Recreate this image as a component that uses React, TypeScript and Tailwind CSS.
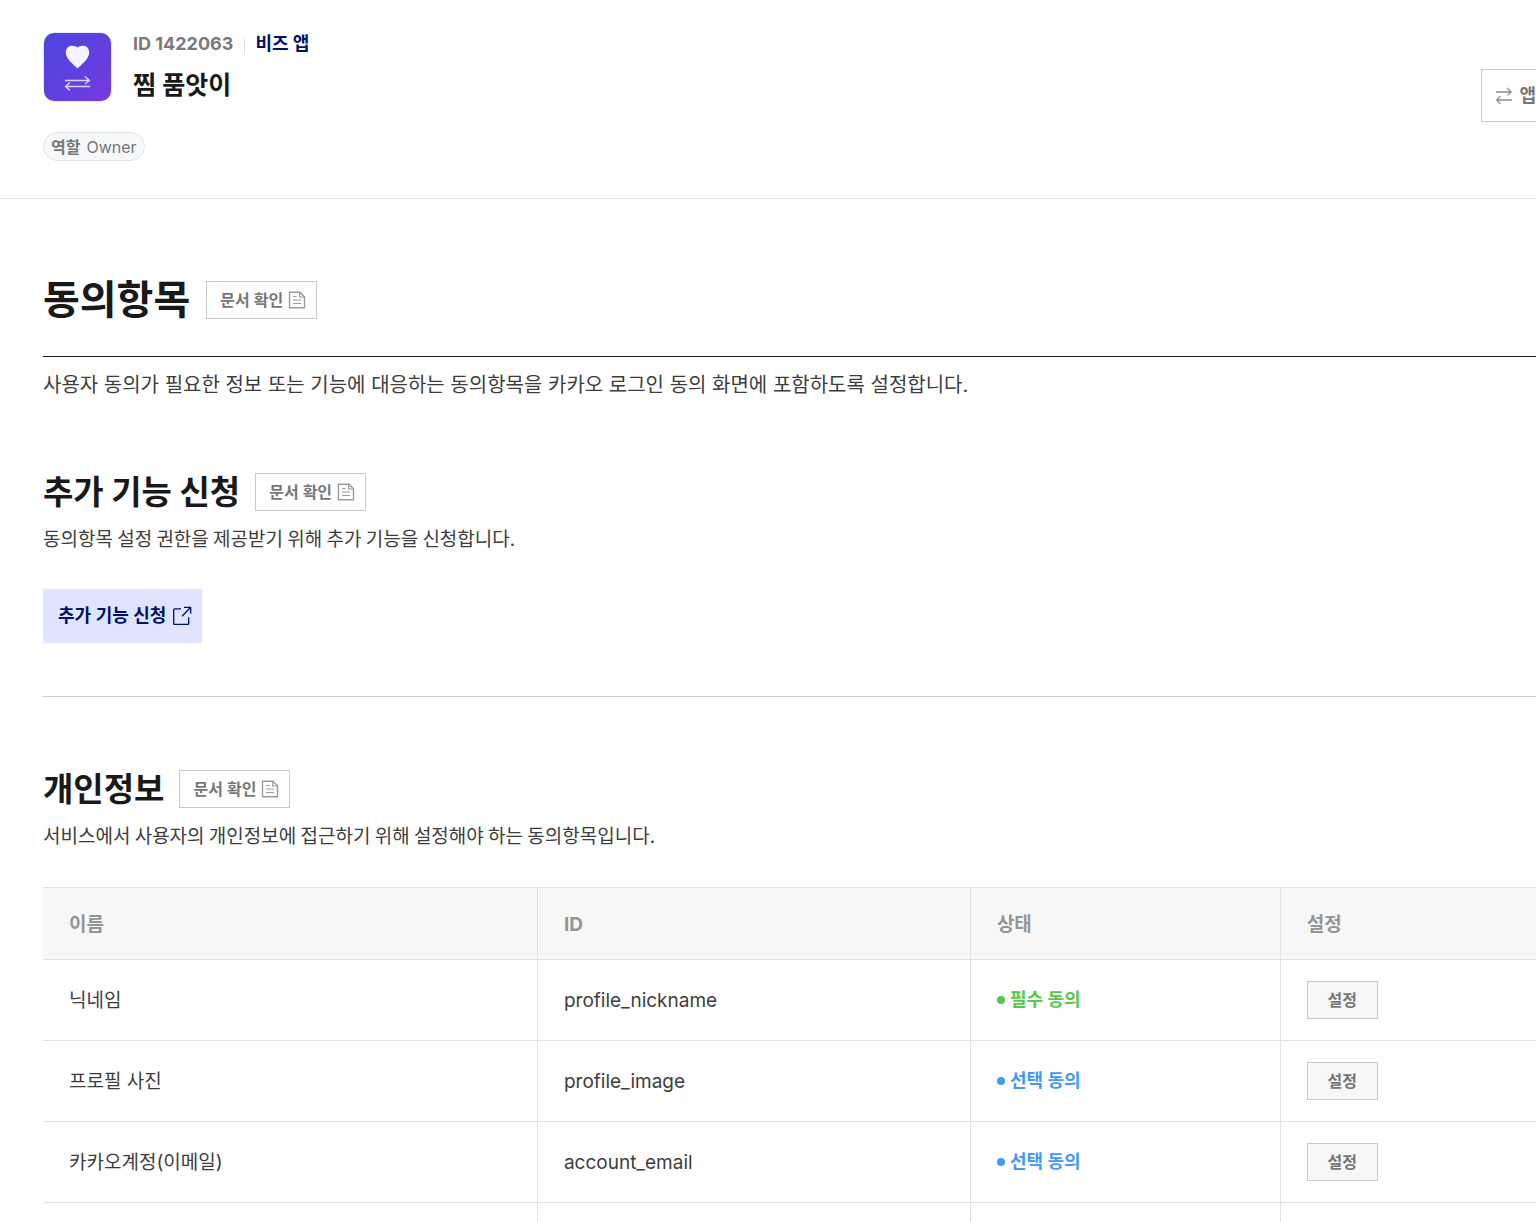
import React from "react";

function SwapIcon({ className }: { className: string }) {
  return (
    <svg viewBox="0 0 18 18" fill="none" stroke="currentColor" strokeWidth="1.3" className={className} aria-hidden="true">
      <path d="M1 5H16.2M12 0.9L16.2 5L12.6 8.4M17 13H1.6M5.6 9.2L1.6 13L5.6 17" />
    </svg>
  );
}

function DocIcon() {
  return (
    <svg viewBox="0 0 18 18" fill="none" stroke="currentColor" className="size-[18px] text-[#9b9b9b]" aria-hidden="true">
      <path d="M1.5 1.3H12L16.5 5.8V16.7H1.5Z" strokeWidth="1.4" />
      <path d="M11.6 1.5V6H16.4" strokeWidth="1.2" />
      <path d="M5 5.5H8.6M5 9H13.2M5 12.5H13.2" strokeWidth="1.2" />
    </svg>
  );
}

function ExternalIcon() {
  return (
    <svg viewBox="0 0 20 20" fill="none" stroke="currentColor" strokeWidth="1.3" className="size-5" aria-hidden="true">
      <path d="M9 2.8H2.6Q1.7 2.8 1.7 3.7V17.4Q1.7 18.3 2.6 18.3H15.8Q16.7 18.3 16.7 17.4V11.2" />
      <path d="M12 1.3H18.7V7.8M18.5 1.5L10 10.2" />
    </svg>
  );
}

function AppLogo() {
  return (
    <svg viewBox="0 0 69 70" className="h-[70px] w-[69px] shrink-0" role="img" aria-label="찜 품앗이">
      <defs>
        <linearGradient id="logo" x1="0" y1="0" x2="1" y2="1">
          <stop offset="0" stopColor="#4a46e0" />
          <stop offset="1" stopColor="#753ade" />
        </linearGradient>
      </defs>
      <rect x="0.5" y="0.5" width="68" height="69" rx="11" fill="#fff" stroke="#ebebf5" />
      <rect x="1" y="1" width="67" height="68" rx="10" fill="url(#logo)" />
      <path
        d="M34.5 36.5C31 33 22.8 27 22.8 20.5C22.8 16.5 25.6 13.8 29 13.8C31.5 13.8 33.5 14.5 34.5 15.7C35.5 14.5 37.5 13.8 40 13.8C43.4 13.8 46.2 16.5 46.2 20.5C46.2 27 38 33 34.5 36.5Z"
        fill="#f5f3ff"
      />
      <path
        d="M22 48.500H46.300M42 44.500L46.300 48.500L42 52M47 54.500H22.600M26.800 50.500L22.600 54.500L26.800 58.500"
        fill="none"
        stroke="#d9d2fb"
        strokeWidth="1.5"
      />
    </svg>
  );
}

function DocButton() {
  return (
    <button
      type="button"
      className="flex h-[38px] items-center gap-[5px] border border-[#c9c9c9] bg-white pr-2.5 pl-[13px] text-base leading-6 font-semibold text-[#777777]"
    >
      문서 확인
      <DocIcon />
    </button>
  );
}

function SectionHeading({ title, description }: { title: string; description: string }) {
  return (
    <div className="font-['Noto_Sans_CJK_KR',sans-serif]">
      <div className="flex items-center gap-[15px]">
        <h3 className="pb-1 text-[33px] leading-[44px] font-semibold text-[#191919]">{title}</h3>
        <div className="font-[Inter,'Noto_Sans_CJK_KR',sans-serif]">
          <DocButton />
        </div>
      </div>
      <p className="mt-1.5 text-[19px] leading-8">{description}</p>
    </div>
  );
}

const rows = [
  { name: "닉네임", id: "profile_nickname", status: "필수 동의", required: true },
  { name: "프로필 사진", id: "profile_image", status: "선택 동의", required: false },
  { name: "카카오계정(이메일)", id: "account_email", status: "선택 동의", required: false },
];

export default function App() {
  return (
    <div className="overflow-x-hidden bg-white font-[Inter,'Noto_Sans_CJK_KR',sans-serif] text-[#3d3d3d]">
      <header className="flex h-[199px] justify-between border-b border-[#e5e5e5] pt-8 pl-[43px]">
        <div>
          <div className="flex gap-[21px]">
            <AppLogo />
            <div>
              <p className="flex h-6 items-center text-lg leading-6 font-bold text-[#7a7a7a]">
                ID 1422063
                <span className="mr-2.5 ml-[11px] mt-1 h-3.5 w-px bg-[#d9d9d9]" />
                <a href="#biz" className="text-[#00116b]">비즈 앱</a>
              </p>
              <h1 className="mt-[11px] text-[25px] leading-9 font-semibold text-[#191919]">찜 품앗이</h1>
            </div>
          </div>
          <p className="mt-[29px] flex h-[29px] w-fit items-center gap-1.5 rounded-full border border-[#e4e5e7] bg-[#f6f7f9] px-[7px] text-base leading-6 text-[#777777]">
            <span className="font-semibold">역할</span>
            <span>Owner</span>
          </p>
        </div>
        <button
          type="button"
          className="mt-[37px] flex h-[53px] shrink-0 items-center gap-1.5 border border-r-0 border-[#c9c9c9] pl-[13px] text-lg leading-6 font-semibold text-[#777777]"
        >
          <SwapIcon className="size-[18px] text-[#8f8f8f]" />
          앱
        </button>
      </header>

      <main className="pl-[43px]">
        <div className="flex items-center gap-4 border-b border-[#191919] pt-[73px] pb-7">
          <h2 className="text-[40px] leading-[56px] font-semibold text-[#191919]">동의항목</h2>
          <DocButton />
        </div>
        <p className="mt-3 text-xl leading-8">
          사용자 동의가 필요한 정보 또는 기능에 대응하는 동의항목을 카카오 로그인 동의 화면에 포함하도록 설정합니다.
        </p>

        <section className="border-b border-[#cccccc] pt-[67px] pb-[53px]">
          <SectionHeading title="추가 기능 신청" description="동의항목 설정 권한을 제공받기 위해 추가 기능을 신청합니다." />
          <button
            type="button"
            className="mt-[35px] flex h-[54px] items-center gap-1.5 bg-[#e0e4ff] pr-2.5 pl-[15px] text-lg leading-6 font-semibold text-[#00116b]"
          >
            추가 기능 신청
            <ExternalIcon />
          </button>
        </section>

        <section className="pt-[68px]">
          <SectionHeading title="개인정보" description="서비스에서 사용자의 개인정보에 접근하기 위해 설정해야 하는 동의항목입니다." />
          <table className="mt-9 w-full table-fixed border-separate border-spacing-0 border-t border-[#e2e2e2] text-left text-[19px] leading-7">
            <thead className="bg-[#f7f7f7] text-[#959595]">
              <tr className="h-[72px] *:border-b *:border-[#e2e2e2] *:px-[26px] *:pt-0.5 *:font-bold *:not-last:border-r">
                <th scope="col" className="w-[33.15%]">이름</th>
                <th scope="col" className="w-[29%]">ID</th>
                <th scope="col" className="w-[20.75%]">상태</th>
                <th scope="col">설정</th>
              </tr>
            </thead>
            <tbody>
              {rows.map((row) => (
                <tr key={row.id} className="h-[81px] *:border-b *:border-[#e2e2e2] *:px-[26px] *:not-last:border-r">
                  <td className="pt-0.5">{row.name}</td>
                  <td className="pt-0.5">{row.id}</td>
                  <td>
                    <span
                      className={
                        row.required
                          ? "flex items-center gap-[5px] text-lg leading-6 font-semibold text-[#55c84d]"
                          : "flex items-center gap-[5px] text-lg leading-6 font-semibold text-[#4299f7]"
                      }
                    >
                      <span className="size-2 rounded-full bg-current" />
                      {row.status}
                    </span>
                  </td>
                  <td>
                    <button
                      type="button"
                      className="block h-[38px] w-[71px] border border-[#c9c9c9] bg-[#f7f7f7] text-base leading-6 font-semibold text-[#777777]"
                    >
                      설정
                    </button>
                  </td>
                </tr>
              ))}
              <tr className="h-[19px] *:border-[#e2e2e2] *:not-last:border-r">
                <td />
                <td />
                <td />
                <td />
              </tr>
            </tbody>
          </table>
        </section>
      </main>
    </div>
  );
}
